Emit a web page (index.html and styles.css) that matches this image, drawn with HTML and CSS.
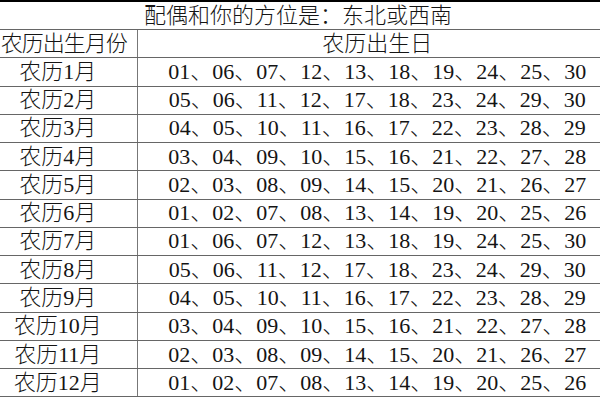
FILE: index.html
```html
<!DOCTYPE html>
<html lang="zh-CN">
<head>
<meta charset="utf-8">
<title>配偶方位表</title>
<link rel="stylesheet" href="styles.css">
</head>
<body>
<table class="chart">
  <colgroup><col class="col-month"><col class="col-days"></colgroup>
  <tr class="title-row"><td colspan="2">配偶和你的方位是：东北或西南</td></tr>
  <tr class="head-row"><td class="month head-month">农历出生月份</td><td class="days">农历出生日</td></tr>
  <tr><td class="month">农历1月</td><td class="days">01、06、07、12、13、18、19、24、25、30</td></tr>
  <tr><td class="month">农历2月</td><td class="days">05、06、11、12、17、18、23、24、29、30</td></tr>
  <tr><td class="month">农历3月</td><td class="days">04、05、10、11、16、17、22、23、28、29</td></tr>
  <tr><td class="month">农历4月</td><td class="days">03、04、09、10、15、16、21、22、27、28</td></tr>
  <tr><td class="month">农历5月</td><td class="days">02、03、08、09、14、15、20、21、26、27</td></tr>
  <tr><td class="month">农历6月</td><td class="days">01、02、07、08、13、14、19、20、25、26</td></tr>
  <tr><td class="month">农历7月</td><td class="days">01、06、07、12、13、18、19、24、25、30</td></tr>
  <tr><td class="month">农历8月</td><td class="days">05、06、11、12、17、18、23、24、29、30</td></tr>
  <tr><td class="month">农历9月</td><td class="days">04、05、10、11、16、17、22、23、28、29</td></tr>
  <tr><td class="month">农历10月</td><td class="days">03、04、09、10、15、16、21、22、27、28</td></tr>
  <tr><td class="month">农历11月</td><td class="days">02、03、08、09、14、15、20、21、26、27</td></tr>
  <tr><td class="month">农历12月</td><td class="days">01、02、07、08、13、14、19、20、25、26</td></tr>
</table>
</body>
</html>
```
FILE: styles.css
```css
html, body {
  margin: 0;
  padding: 0;
  background: #ffffff;
  overflow: hidden;
}
body {
  width: 600px;
  height: 400px;
}
.chart {
  margin-left: -21px;
  width: 638px;
  border-collapse: collapse;
  table-layout: fixed;
  font-family: "Liberation Serif", "Noto Sans CJK SC", serif;
  font-weight: 300;
  font-size: 22px;
  color: #141414;
  border-top: 2px solid #000;
}
.col-month {
  width: 158px;
}
.col-days {
  width: 480px;
}
.chart td {
  height: 27.27px;
  padding: 0;
  text-align: center;
  vertical-align: middle;
  line-height: 24px;
  white-space: nowrap;
  border-bottom: 1px solid #666;
}
.chart td.month {
  border-right: 1px solid #777;
}
.chart td.head-month {
  padding-left: 12px;
  letter-spacing: -1px;
}
.title-row td {
  height: 27px;
}
```
